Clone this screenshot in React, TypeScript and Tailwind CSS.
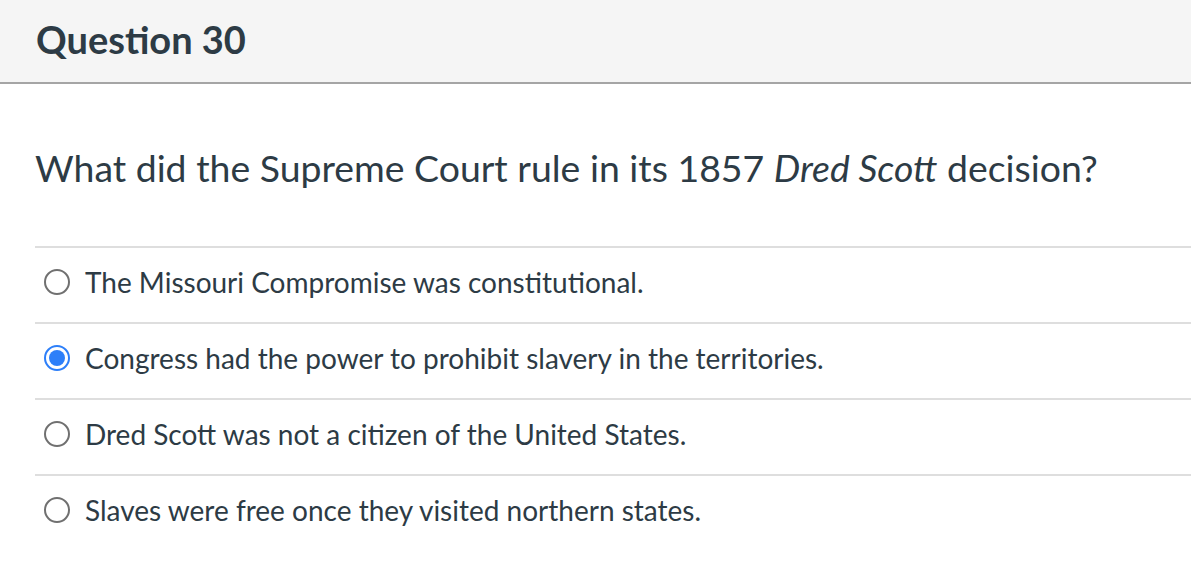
import React, { useState } from 'react';

const answers = [
  'The Missouri Compromise was constitutional.',
  'Congress had the power to prohibit slavery in the territories.',
  'Dred Scott was not a citizen of the United States.',
  'Slaves were free once they visited northern states.',
];

function Radio({ checked }: { checked: boolean }) {
  if (checked) {
    return (
      <span className="flex h-[26px] w-[26px] shrink-0 items-center justify-center rounded-full border-[2px] border-[#2d7ff9] bg-white">
        <span className="h-[16px] w-[16px] rounded-full bg-[#2d7ff9]" />
      </span>
    );
  }
  return <span className="h-[26px] w-[26px] shrink-0 rounded-full border-[2px] border-[#707070] bg-white" />;
}

export default function App() {
  const [picked, setPicked] = useState(1);

  return (
    <div className="min-h-screen bg-white text-[#2d3b45] font-['Lato',sans-serif]">
      {/* Question header */}
      <div className="h-[84px] border-b-2 border-[#a5a5a5] bg-[#f5f5f5] px-9 flex items-center">
        <h1 className="text-[38px] font-bold leading-none pb-1">Question 30</h1>
      </div>

      <div className="pl-[35px]">
        <p className="pt-[62px] pb-[56px] text-[37.4px] leading-[44px]">
          What did the Supreme Court rule in its 1857 <em>Dred Scott</em> decision?
        </p>

        <div>
          {answers.map((a, i) => (
            <label
              key={a}
              onClick={() => setPicked(i)}
              className="flex h-[76px] cursor-pointer items-center gap-[15px] border-t-2 border-[#dedede] pl-[9px] pb-[6px]"
            >
              <Radio checked={picked === i} />
              <span className="text-[28px]">{a}</span>
            </label>
          ))}
        </div>
      </div>
    </div>
  );
}
